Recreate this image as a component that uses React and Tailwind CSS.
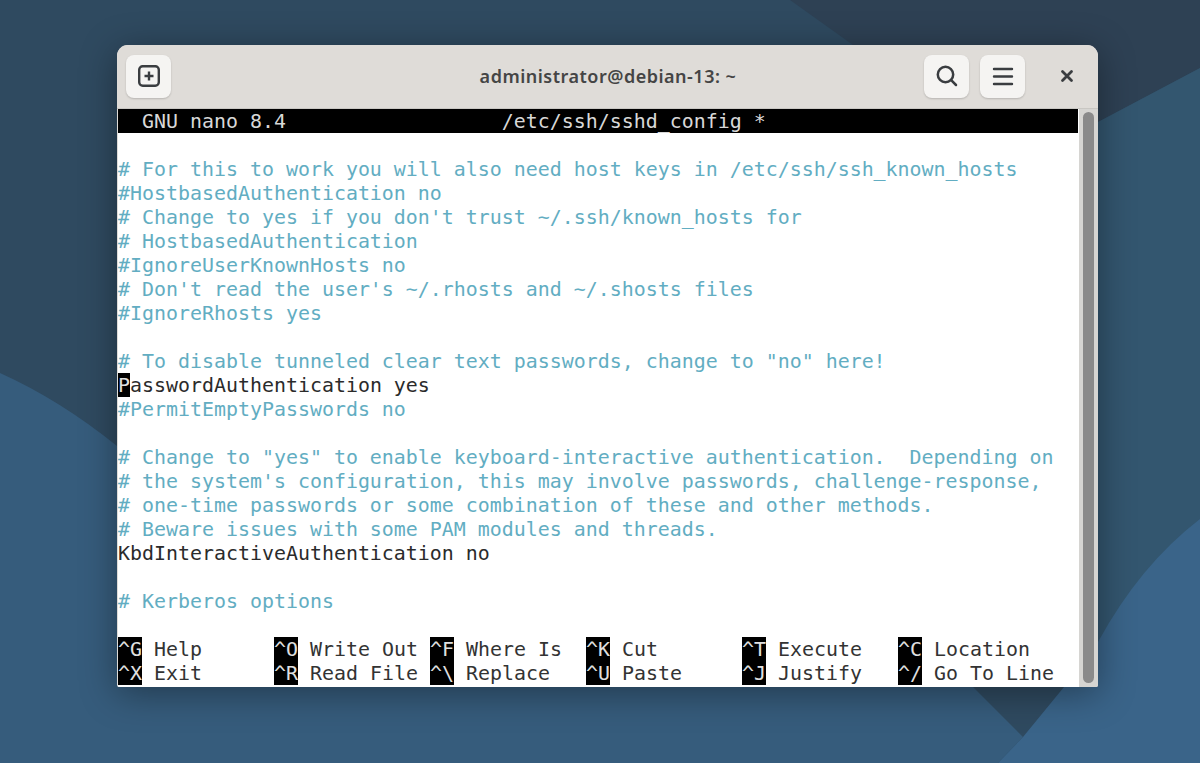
const rows = [
  { text: "" },
  { text: "# For this to work you will also need host keys in /etc/ssh/ssh_known_hosts", comment: true },
  { text: "#HostbasedAuthentication no", comment: true },
  { text: "# Change to yes if you don't trust ~/.ssh/known_hosts for", comment: true },
  { text: "# HostbasedAuthentication", comment: true },
  { text: "#IgnoreUserKnownHosts no", comment: true },
  { text: "# Don't read the user's ~/.rhosts and ~/.shosts files", comment: true },
  { text: "#IgnoreRhosts yes", comment: true },
  { text: "" },
  { text: '# To disable tunneled clear text passwords, change to "no" here!', comment: true },
  { text: "PasswordAuthentication yes", cursor: true },
  { text: "#PermitEmptyPasswords no", comment: true },
  { text: "" },
  { text: '# Change to "yes" to enable keyboard-interactive authentication.  Depending on', comment: true },
  { text: "# the system's configuration, this may involve passwords, challenge-response,", comment: true },
  { text: "# one-time passwords or some combination of these and other methods.", comment: true },
  { text: "# Beware issues with some PAM modules and threads.", comment: true },
  { text: "KbdInteractiveAuthentication no" },
  { text: "" },
  { text: "# Kerberos options", comment: true },
  { text: "" },
];

const shortcuts = [
  [["^G", "Help"], ["^O", "Write Out"], ["^F", "Where Is"], ["^K", "Cut"], ["^T", "Execute"], ["^C", "Location"]],
  [["^X", "Exit"], ["^R", "Read File"], ["^\\", "Replace"], ["^U", "Paste"], ["^J", "Justify"], ["^/", "Go To Line"]],
];

const Wallpaper = () => (
  <svg className="absolute inset-0 h-full w-full" viewBox="0 0 1200 763" aria-hidden="true">
    <rect width="1200" height="763" fill="#2f4a60" />
    <path d="M790 0 L860 50 L1098 122 L1200 68 L1200 0 Z" fill="#2e4154" />
    <path d="M1098 122 L1200 68 L1200 540 L1064 687 L1098 600 Z" fill="#33566f" />
    <path d="M0 373 Q60 400 117 446 L973 687 L1023 737 L998 763 L0 763 Z" fill="#365c7c" />
    <path d="M1200 519 Q1140 565 1098 642 L1064 687 L1023 737 L998 763 L1200 763 Z" fill="#3a6489" />
  </svg>
);

const HeaderButton = ({ children }) => (
  <div className="flex h-[43px] w-[45px] items-center justify-center rounded-lg bg-[#f5f4f2] shadow-[0_1px_2px_rgba(0,0,0,0.18)]">
    {children}
  </div>
);

const Key = ({ children }) => (
  <span className="inline-block h-6 bg-black text-[#e0e0e0]">{children}</span>
);

const Line = ({ row }) => {
  if (row.cursor) {
    return (
      <div className="h-6 text-[#2b2b2b]">
        <Key>{row.text[0]}</Key>
        {row.text.slice(1)}
      </div>
    );
  }
  return <div className={`h-6 ${row.comment ? "text-[#62adc2]" : "text-[#2b2b2b]"}`}>{row.text}</div>;
};

export default function App() {
  return (
    <div className="relative h-[763px] w-[1200px] overflow-hidden pl-[117px] pt-[45px]">
      <Wallpaper />
      <div className="relative flex h-[642px] w-[981px] flex-col overflow-hidden rounded-t-[11px] rounded-b-[2px] bg-[#dedbd7] shadow-[0_6px_36px_rgba(0,0,0,0.38)]">
        <header className="grid h-[64px] shrink-0 grid-cols-[1fr_auto_1fr] items-center border-b border-[#c9c7c3] bg-[#dfdcd8] pb-px pl-[9px] pr-[8px]">
          <HeaderButton>
            <svg width="24" height="24" viewBox="0 0 24 24" fill="none" stroke="#3a3d40" strokeWidth="2.4">
              <rect x="2.2" y="2.2" width="19.6" height="19.6" rx="3.5" />
              <path d="M12 7.5v9M7.5 12h9" />
            </svg>
          </HeaderButton>
          <div className="font-['Noto_Sans',sans-serif] text-[18px] font-semibold tracking-[0.5px] text-[#454545]">
            administrator@debian-13: ~
          </div>
          <div className="flex items-center justify-end gap-[11px]">
            <HeaderButton>
              <svg width="24" height="24" viewBox="0 0 24 24" fill="none" stroke="#3a3d40" strokeWidth="2.5" strokeLinecap="round">
                <circle cx="10.5" cy="10.5" r="7.7" />
                <path d="M16.2 16.2 21 21" />
              </svg>
            </HeaderButton>
            <HeaderButton>
              <svg width="24" height="24" viewBox="0 0 24 24" fill="none" stroke="#3a3d40" strokeWidth="2.4" strokeLinecap="round">
                <path d="M3 5h18M3 12.5h18M3 20h18" />
              </svg>
            </HeaderButton>
            <div className="flex h-[43px] w-[54px] items-center justify-center pl-[8px]">
              <svg width="14" height="14" viewBox="0 0 14 14" fill="none" stroke="#3a3d40" strokeWidth="2.8" strokeLinecap="round">
                <path d="M2.5 2.5l9 9M11.5 2.5l-9 9" />
              </svg>
            </div>
          </div>
        </header>

        <div className="flex min-h-0 flex-1 pl-px">
          <main className="w-[961px] whitespace-pre bg-white font-['DejaVu_Sans_Mono',monospace] text-[19.93px] leading-[26px]">
            <div className="h-6 w-[960px] overflow-hidden bg-black text-[#d8d8d8]">{"  GNU nano 8.4                  /etc/ssh/sshd_config *"}</div>
            {rows.map((row, index) => (
              <Line key={index} row={row} />
            ))}
            {shortcuts.map((line, index) => (
              <div key={index} className="flex h-6 text-[#333333]">
                {line.map(([key, label]) => (
                  <div key={key} className="w-[156px]">
                    <Key>{key}</Key> {label}
                  </div>
                ))}
              </div>
            ))}
          </main>
          <aside className="flex flex-1 justify-center bg-[#d6d5d2] pb-[4px] pt-[3px]">
            <div className="w-[11px] rounded-full bg-[#8a8a8a]" />
          </aside>
        </div>
      </div>
    </div>
  );
}
